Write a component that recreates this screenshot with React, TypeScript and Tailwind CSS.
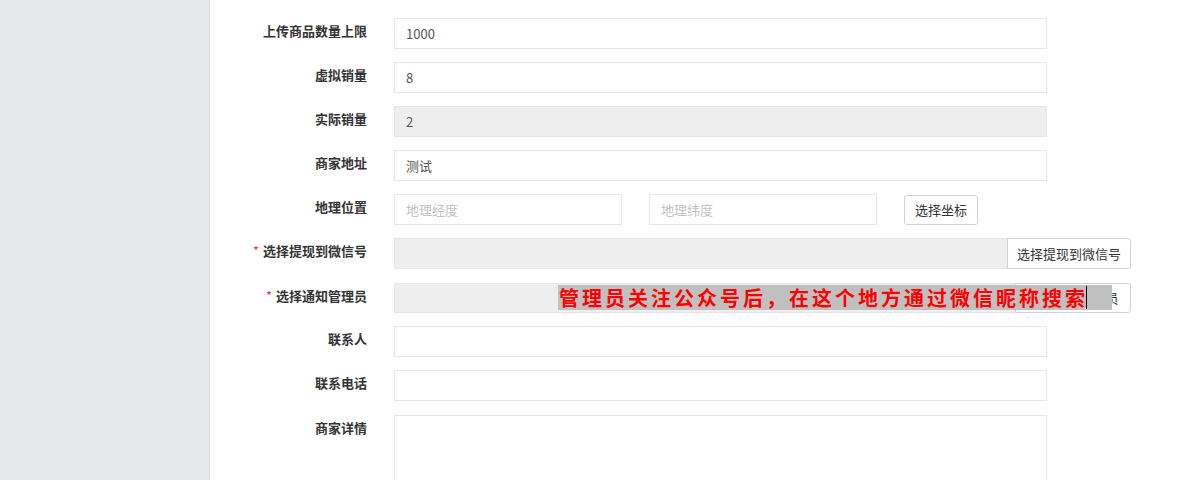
import React from "react";

const font = { fontFamily: '"Noto Sans CJK SC", "Noto Sans", sans-serif' };

function Label({ text, required }: { text: string; required?: boolean }) {
  return (
    <div className="w-[157px] shrink-0 pt-[3px] text-right text-[13px] font-bold leading-[20px] text-[#333]">
      {required && <span className="mr-[4px] font-normal text-[#e4393c]">*</span>}
      {text}
    </div>
  );
}

function Field({
  value,
  placeholder,
  disabled,
  w = "w-[653px]",
}: {
  value?: string;
  placeholder?: string;
  disabled?: boolean;
  w?: string;
}) {
  return (
    <div
      className={`${w} flex h-[31px] items-center border border-[#e5e6e7] px-[11px] text-[13px] ${
        disabled ? "bg-[#eeeeee]" : "bg-white"
      } ${value ? "text-[#555]" : "text-[#c2c2c2]"}`}
    >
      {value || placeholder || ""}
    </div>
  );
}

export default function App() {
  return (
    <div className="flex h-[480px] w-[1180px] overflow-hidden bg-white" style={font}>
      <div className="w-[210px] shrink-0 border-r border-[#dcdde0] bg-[#e7e8eb]" />
      <div className="flex flex-1 flex-col gap-[13px] pt-[18px]">
        <div className="flex">
          <Label text="上传商品数量上限" />
          <div className="ml-[27px]">
            <Field value="1000" />
          </div>
        </div>
        <div className="flex">
          <Label text="虚拟销量" />
          <div className="ml-[27px]">
            <Field value="8" />
          </div>
        </div>
        <div className="flex">
          <Label text="实际销量" />
          <div className="ml-[27px]">
            <Field value="2" disabled />
          </div>
        </div>
        <div className="flex">
          <Label text="商家地址" />
          <div className="ml-[27px]">
            <Field value="测试" />
          </div>
        </div>
        <div className="flex">
          <Label text="地理位置" />
          <div className="ml-[27px] flex items-center gap-[27px]">
            <Field placeholder="地理经度" w="w-[228px]" />
            <Field placeholder="地理纬度" w="w-[228px]" />
            <div className="flex h-[30px] w-[74px] items-center justify-center rounded-[3px] border border-[#d2d2d2] bg-white text-[13px] text-[#333]">
              选择坐标
            </div>
          </div>
        </div>
        <div className="flex">
          <Label text="选择提现到微信号" required />
          <div className="ml-[27px] flex">
            <div className="h-[31px] w-[614px] border border-[#e5e6e7] bg-[#eeeeee]" />
            <div className="-ml-px flex h-[31px] w-[124px] items-center justify-center rounded-r-[3px] border border-[#d2d2d2] bg-white text-[13px] text-[#333]">
              选择提现到微信号
            </div>
          </div>
        </div>
        <div className="relative mt-px flex">
          <Label text="选择通知管理员" required />
          <div className="ml-[27px] flex">
            <div className="h-[30px] w-[622px] border border-[#e5e6e7] bg-[#eeeeee]" />
            <div className="-ml-px flex h-[30px] w-[116px] items-center justify-center rounded-r-[3px] border border-[#d2d2d2] bg-white text-[13px] text-[#333]">
              选择通知管理员
            </div>
          </div>
          <div className="absolute left-[348px] top-[2px] flex h-[25px] w-[554px] items-center bg-[#c0c0c0]">
            <span className="whitespace-nowrap pl-[1px] text-[20px] font-bold leading-[25px] tracking-[3px] text-[#ff0000]">
              管理员关注公众号后，在这个地方通过微信昵称搜索
            </span>
            <span className="-ml-[2px] h-[23px] w-px bg-black" />
          </div>
        </div>
        <div className="flex">
          <Label text="联系人" />
          <div className="ml-[27px]">
            <Field />
          </div>
        </div>
        <div className="flex">
          <Label text="联系电话" />
          <div className="ml-[27px]">
            <Field />
          </div>
        </div>
        <div className="mt-px flex">
          <Label text="商家详情" />
          <div className="ml-[27px]">
            <div className="h-[100px] w-[653px] border border-[#e5e6e7] bg-white" />
          </div>
        </div>
      </div>
    </div>
  );
}
